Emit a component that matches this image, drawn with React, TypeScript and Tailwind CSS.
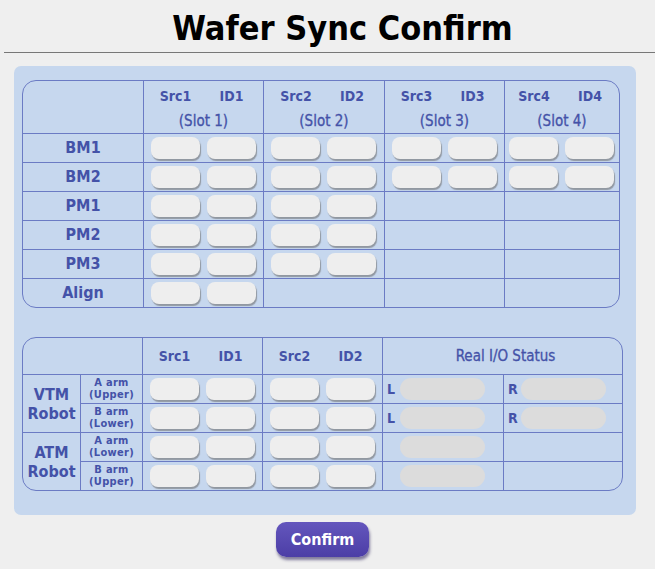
const font = '[font-family:"DejaVu_Sans_Condensed","DejaVu_Sans",sans-serif] [font-stretch:condensed]';

const slots = [1, 2, 3, 4];
const rows1 = [
  { name: 'BM1', slots: 4 },
  { name: 'BM2', slots: 4 },
  { name: 'PM1', slots: 2 },
  { name: 'PM2', slots: 2 },
  { name: 'PM3', slots: 2 },
  { name: 'Align', slots: 1 },
];

const robots = [
  { name: ['VTM', 'Robot'], arms: [['A arm', '(Upper)'], ['B arm', '(Lower)']], io: true },
  { name: ['ATM', 'Robot'], arms: [['A arm', '(Lower)'], ['B arm', '(Upper)']], io: false },
];

function Pill() {
  return <div className="h-[22px] w-[49px] rounded-[8px] bg-[#eeeeee] shadow-[1px_2px_1px_rgba(110,110,110,0.6)]" />;
}

function PillPair() {
  return (
    <div className="flex h-full items-center justify-center gap-[7px] pr-[1px]">
      <Pill />
      <Pill />
    </div>
  );
}

function IoCell({ letter }: { letter?: string }) {
  return (
    <div className="flex items-center border-t border-l border-[#6b7bc4] pl-[4px]">
      <span className="w-[13px] text-[14px] font-bold text-[#4452a8]">{letter}</span>
      <div className="h-[22px] w-[85px] rounded-[11px] bg-[#dcdcdc]" />
    </div>
  );
}

export default function App() {
  return (
    <div className={`min-h-screen bg-[#efefef] ${font}`}>
      <div className="ml-[4px] h-[53px] border-b border-[#777777] pl-[26px] pt-[8px] text-center">
        <h1 className="text-[34px] font-bold leading-[40px] text-black">Wafer Sync Confirm</h1>
      </div>

      <div className="ml-[14px] mt-[13px] w-[622px] rounded-[7px] bg-[#c6d7ee] pb-[24px] pl-[8px] pt-[14px]">
        {/* module table */}
        <div className="grid w-[598px] grid-cols-[120px_120px_121px_120px_115px] grid-rows-[52px_repeat(6,29px)] rounded-[14px] border border-[#6b7bc4] text-[#4452a8]">
          <div />
          {slots.map((s) => (
            <div key={s} className="flex flex-col items-center border-l border-[#6b7bc4] pt-[6px]">
              <div className="flex gap-[7px] text-[14px] font-bold leading-[18px]">
                <span className="w-[49px] text-center">Src{s}</span>
                <span className="w-[49px] text-center">ID{s}</span>
              </div>
              <div className="mt-[7px] text-[15px] leading-[18px] [-webkit-text-stroke:0.3px_#4452a8]">(Slot {s})</div>
            </div>
          ))}
          {rows1.map((r) => (
            <div key={r.name} className="contents">
              <div className="flex items-center justify-center border-t border-[#6b7bc4] text-[16px] font-bold">{r.name}</div>
              {slots.map((s) => (
                <div key={s} className="border-t border-l border-[#6b7bc4]">
                  {s <= r.slots ? <PillPair /> : null}
                </div>
              ))}
            </div>
          ))}
        </div>

        {/* robot table */}
        <div className="mt-[29px] grid w-[601px] grid-cols-[57px_62px_120px_120px_121px_119px] grid-rows-[36px_repeat(4,29px)] rounded-[14px] border border-[#6b7bc4] text-[#4452a8]">
          <div className="col-span-2" />
          {[1, 2].map((s) => (
            <div key={s} className="flex items-center justify-center gap-[7px] border-l border-[#6b7bc4] text-[14px] font-bold">
              <span className="w-[49px] text-center">Src{s}</span>
              <span className="w-[49px] text-center">ID{s}</span>
            </div>
          ))}
          <div className="col-span-2 flex items-center justify-center border-l border-[#6b7bc4] pl-[6px] text-[15px] [-webkit-text-stroke:0.3px_#4452a8]">
            Real I/O Status
          </div>

          {robots.map((rb) => (
            <div key={rb.name[0]} className="contents">
              {rb.arms.map((arm, i) => (
                <div key={i} className="contents">
                  {i === 0 ? (
                    <div className="row-span-2 flex flex-col items-center justify-center border-t border-[#6b7bc4] text-[16px] font-bold leading-[19px]">
                      <span>{rb.name[0]}</span>
                      <span>{rb.name[1]}</span>
                    </div>
                  ) : null}
                  <div className="flex flex-col items-center justify-center border-t border-l border-[#6b7bc4] pb-[1px] text-[11px] font-bold leading-[12px] tracking-[0.3px]">
                    <span>{arm[0]}</span>
                    <span>{arm[1]}</span>
                  </div>
                  <div className="border-t border-l border-[#6b7bc4]">
                    <PillPair />
                  </div>
                  <div className="border-t border-l border-[#6b7bc4]">
                    <PillPair />
                  </div>
                  <IoCell letter={rb.io ? 'L' : undefined} />
                  {rb.io ? <IoCell letter="R" /> : <div className="border-t border-l border-[#6b7bc4]" />}
                </div>
              ))}
            </div>
          ))}
        </div>
      </div>

      <div className="mt-[7px] flex w-[645px] justify-center">
        <button
          type="button"
          className="h-[35px] w-[93px] rounded-[10px] bg-gradient-to-b from-[#6456bd] to-[#4c3ea6] text-[16px] font-bold text-white shadow-[1px_3px_3px_rgba(40,30,90,0.55)]"
        >
          Confirm
        </button>
      </div>
    </div>
  );
}
